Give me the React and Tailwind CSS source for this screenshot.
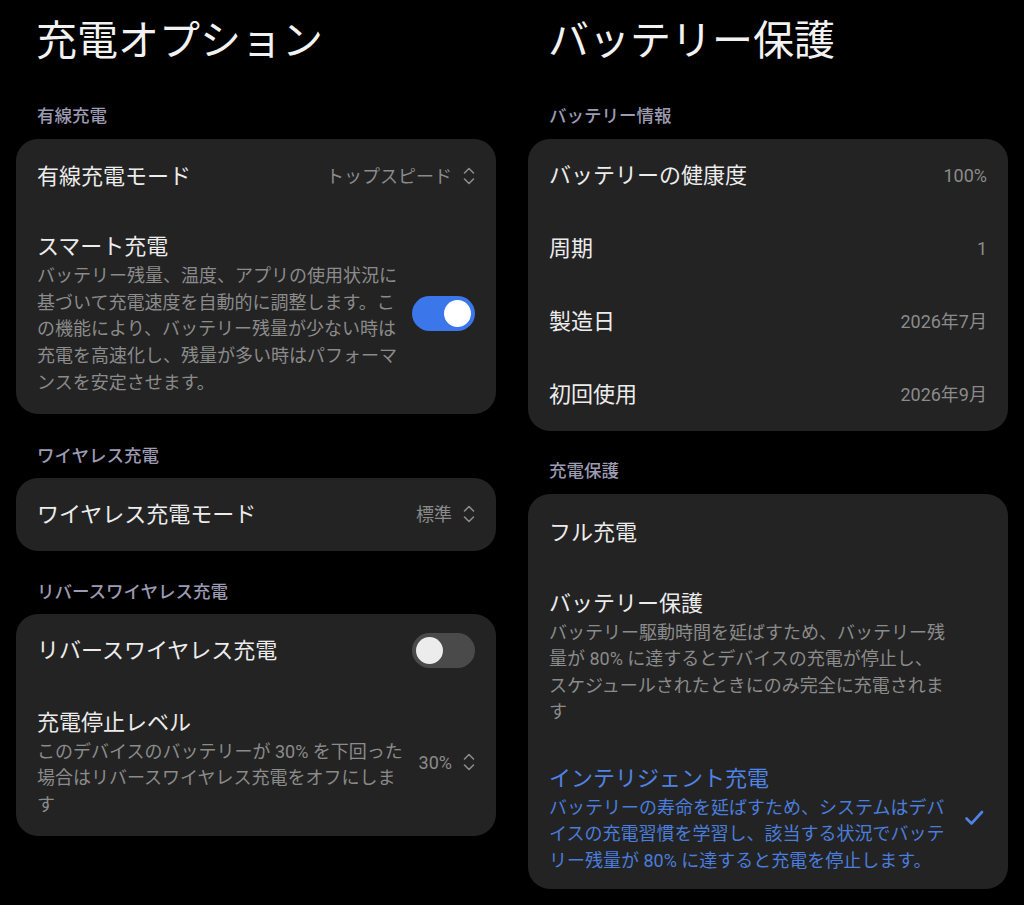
import React from "react";

// Small up/down chevron used next to selectable values
const IconUpDown = ({ className = "" }) => (
  <svg className={className} width="12" height="22" viewBox="0 0 12 22" fill="none" stroke="currentColor">
    <path d="M1.5 8l4.5-4.5L10.5 8" strokeWidth="1.6" strokeLinecap="round" strokeLinejoin="round" />
    <path d="M1.5 14l4.5 4.5L10.5 14" strokeWidth="1.6" strokeLinecap="round" strokeLinejoin="round" />
  </svg>
);

const IconCheck = ({ className = "" }) => (
  <svg className={className} width="20" height="18" viewBox="0 0 20 18" fill="none" stroke="currentColor">
    <path d="M2.5 9.5l5 5L18 3" strokeWidth="2.6" strokeLinecap="round" strokeLinejoin="round" />
  </svg>
);

const Toggle = ({ on }) => (
  <div
    className={`w-[63px] h-[35px] rounded-full flex items-center px-[4px] shrink-0 ${
      on ? "bg-[#3b76ea] justify-end" : "bg-[#4a4a4a] justify-start"
    }`}
  >
    <div className={`w-[27px] h-[27px] rounded-full ${on ? "bg-white" : "bg-[#ececec]"}`} />
  </div>
);

const SectionLabel = ({ children, className = "" }) => (
  <div className={`pl-[21px] text-[17.5px] leading-[24px] font-medium text-[#9c9bb2] ${className}`}>
    {children}
  </div>
);

const Card = ({ children }) => (
  <div className="bg-[#232323] rounded-[22px] px-[21px]">{children}</div>
);

const Lines = ({ lines, className = "" }) => (
  <div className={className}>
    {lines.map((l, i) => (
      <div key={i} className="whitespace-nowrap">
        {l}
      </div>
    ))}
  </div>
);

const ValueRow = ({ title, value, chevron, height = "h-[74px]" }) => (
  <div className={`${height} flex items-center justify-between`}>
    <span className="text-[22px] text-[#ececec]">{title}</span>
    <span className="flex items-center gap-[11px] text-[18px] text-[#8b8b8b]">
      {value}
      {chevron && <IconUpDown className="text-[#8b8b8b]" />}
    </span>
  </div>
);

export default function App() {
  return (
    <div className="w-[1024px] h-[905px] bg-black overflow-hidden font-['Roboto','Noto_Sans_CJK_JP',sans-serif] grid grid-cols-2 gap-8 px-4">
      {/* Left column */}
      <div>
        <h1 className="pt-[16px] pl-[20px] text-[41px] leading-[50px] font-normal text-[#f2f2f2]">
          充電オプション
        </h1>

        <SectionLabel className="mt-[38px] mb-[11px]">有線充電</SectionLabel>
        <Card>
          <ValueRow title="有線充電モード" value="トップスピード" chevron />
          <div className="pt-[18px] pb-[17px] flex items-center justify-between">
            <div>
              <div className="text-[22px] leading-[32px] text-[#ececec]">スマート充電</div>
              <Lines
                className="text-[18px] leading-[26.7px] text-[#8b8b8b]"
                lines={[
                  "バッテリー残量、温度、アプリの使用状況に",
                  "基づいて充電速度を自動的に調整します。こ",
                  "の機能により、バッテリー残量が少ない時は",
                  "充電を高速化し、残量が多い時はパフォーマ",
                  "ンスを安定させます。",
                ]}
              />
            </div>
            <Toggle on />
          </div>
        </Card>

        <SectionLabel className="mt-[30px] mb-[10px]">ワイヤレス充電</SectionLabel>
        <Card>
          <ValueRow title="ワイヤレス充電モード" value="標準" chevron height="h-[73px]" />
        </Card>

        <SectionLabel className="mt-[29px] mb-[10px]">リバースワイヤレス充電</SectionLabel>
        <Card>
          <div className="h-[74px] flex items-center justify-between">
            <span className="text-[22px] text-[#ececec]">リバースワイヤレス充電</span>
            <Toggle on={false} />
          </div>
          <div className="pt-[19px] pb-[18px] flex items-center justify-between">
            <div>
              <div className="text-[22px] leading-[32px] text-[#ececec]">充電停止レベル</div>
              <Lines
                className="text-[18px] leading-[26.6px] text-[#8b8b8b]"
                lines={[
                  "このデバイスのバッテリーが 30% を下回った",
                  "場合はリバースワイヤレス充電をオフにしま",
                  "す",
                ]}
              />
            </div>
            <span className="flex items-center gap-[11px] text-[18px] text-[#8b8b8b]">
              30%
              <IconUpDown className="text-[#8b8b8b]" />
            </span>
          </div>
        </Card>
      </div>

      {/* Right column */}
      <div>
        <h1 className="pt-[16px] pl-[20px] text-[41px] leading-[50px] font-normal text-[#f2f2f2]">
          バッテリー保護
        </h1>

        <SectionLabel className="mt-[38px] mb-[11px]">バッテリー情報</SectionLabel>
        <Card>
          {[
            ["バッテリーの健康度", "100%"],
            ["周期", "1"],
            ["製造日", "2026年7月"],
            ["初回使用", "2026年9月"],
          ].map(([t, v]) => (
            <ValueRow key={t} title={t} value={v} height="h-[73px]" />
          ))}
        </Card>

        <SectionLabel className="mt-[28px] mb-[11px]">充電保護</SectionLabel>
        <Card>
          <div className="h-[76px] flex items-center text-[22px] text-[#ececec]">フル充電</div>
          <div className="pt-[18px] pb-[18px]">
            <div className="text-[22px] leading-[32px] text-[#ececec]">バッテリー保護</div>
            <Lines
              className="text-[18px] leading-[26.4px] text-[#8b8b8b]"
              lines={[
                "バッテリー駆動時間を延ばすため、バッテリー残",
                "量が 80% に達するとデバイスの充電が停止し、",
                "スケジュールされたときにのみ完全に充電されま",
                "す",
              ]}
            />
          </div>
          <div className="pt-[19px] pb-[15px] flex items-center justify-between">
            <div>
              <div className="text-[22px] leading-[32px] text-[#4f83e6]">インテリジェント充電</div>
              <Lines
                className="text-[18px] leading-[26.5px] text-[#4a7ddc]"
                lines={[
                  "バッテリーの寿命を延ばすため、システムはデバ",
                  "イスの充電習慣を学習し、該当する状況でバッテ",
                  "リー残量が 80% に達すると充電を停止します。",
                ]}
              />
            </div>
            <IconCheck className="text-[#4f83e6] mr-[3px]" />
          </div>
        </Card>
      </div>
    </div>
  );
}
